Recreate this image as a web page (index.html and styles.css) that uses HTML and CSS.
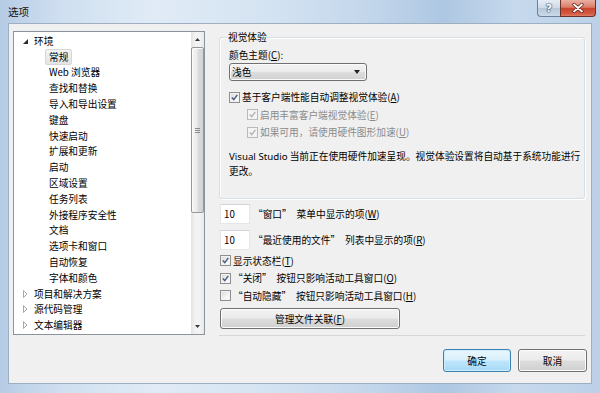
FILE: index.html
```html
<!DOCTYPE html>
<html lang="zh-CN">
<head>
<meta charset="utf-8">
<title>选项</title>
<link rel="stylesheet" href="styles.css">
</head>
<body>
<div class="window">
  <div class="titlebar">
    <div class="title">选项</div>
    <div class="caption-btns">
      <div class="cap-btn help">?</div>
      <div class="cap-btn close">
        <svg width="12" height="10" viewBox="0 0 12 10"><path d="M2 1.5 L10 8.5 M10 1.5 L2 8.5" stroke="#5a1a12" stroke-width="3.2" stroke-linecap="round"/><path d="M2 1.5 L10 8.5 M10 1.5 L2 8.5" stroke="#ffffff" stroke-width="1.8" stroke-linecap="round"/></svg>
      </div>
    </div>
  </div>
  <div class="client">
    <div class="main">
      <div class="tree">
        <div class="tree-list">
          <div class="row root"><span class="exp"><svg width="12" height="12" viewBox="0 0 12 12"><polygon points="1,9 6,9 6,4" fill="#2b2b2b"/></svg></span>环境</div>
          <div class="row child"><span class="sel">常规</span></div>
          <div class="row child">Web 浏览器</div>
          <div class="row child">查找和替换</div>
          <div class="row child">导入和导出设置</div>
          <div class="row child">键盘</div>
          <div class="row child">快速启动</div>
          <div class="row child">扩展和更新</div>
          <div class="row child">启动</div>
          <div class="row child">区域设置</div>
          <div class="row child">任务列表</div>
          <div class="row child">外接程序安全性</div>
          <div class="row child">文档</div>
          <div class="row child">选项卡和窗口</div>
          <div class="row child">自动恢复</div>
          <div class="row child">字体和颜色</div>
          <div class="row root"><span class="exp"><svg width="12" height="12" viewBox="0 0 12 12"><polygon points="1.5,2.5 5,6 1.5,9.5" fill="none" stroke="#a8a8a8"/></svg></span>项目和解决方案</div>
          <div class="row root"><span class="exp"><svg width="12" height="12" viewBox="0 0 12 12"><polygon points="1.5,2.5 5,6 1.5,9.5" fill="none" stroke="#a8a8a8"/></svg></span>源代码管理</div>
          <div class="row root"><span class="exp"><svg width="12" height="12" viewBox="0 0 12 12"><polygon points="1.5,2.5 5,6 1.5,9.5" fill="none" stroke="#a8a8a8"/></svg></span>文本编辑器</div>
        </div>
        <div class="vscroll">
          <div class="sb-arrow"><svg width="5" height="3" viewBox="0 0 5 3"><polygon points="0,3 5,3 2.5,0" fill="#3a3a3a"/></svg></div>
          <div class="sb-track">
            <div class="thumb"><svg width="5" height="5" viewBox="0 0 5 5"><path d="M0 0.5H5M0 2.5H5M0 4.5H5" stroke="#8a8a8a" stroke-width="1"/></svg></div>
          </div>
          <div class="sb-arrow"><svg width="5" height="3" viewBox="0 0 5 3"><polygon points="0,0 5,0 2.5,3" fill="#3a3a3a"/></svg></div>
        </div>
      </div>
      <div class="page">
        <fieldset class="group">
          <legend>视觉体验</legend>
          <div class="lbl">颜色主题(<u>C</u>):</div>
          <div class="combo"><span>浅色</span><svg width="6" height="4" viewBox="0 0 6 4"><polygon points="0,0 6,0 3,4" fill="#222"/></svg></div>
          <div class="chk-row first">
            <span class="cb"><svg width="7" height="7" viewBox="0 0 7 7"><path d="M0.8 3.4 L2.8 5.6 L6.3 0.9" fill="none" stroke="#4a5d82" stroke-width="1.5"/></svg></span>
            <span>基于客户端性能自动调整视觉体验(<u>A</u>)</span>
          </div>
          <div class="chk-row sub disabled">
            <span class="cb"><svg width="7" height="7" viewBox="0 0 7 7"><path d="M0.8 3.4 L2.8 5.6 L6.3 0.9" fill="none" stroke="#b3b3b3" stroke-width="1.5"/></svg></span>
            <span>启用丰富客户端视觉体验(<u>E</u>)</span>
          </div>
          <div class="chk-row sub disabled">
            <span class="cb"><svg width="7" height="7" viewBox="0 0 7 7"><path d="M0.8 3.4 L2.8 5.6 L6.3 0.9" fill="none" stroke="#b3b3b3" stroke-width="1.5"/></svg></span>
            <span>如果可用，请使用硬件图形加速(<u>U</u>)</span>
          </div>
          <div class="desc"><span class="latin">Visual Studio</span> 当前正在使用硬件加速呈现。视觉体验设置将自动基于系统功能进行<br>更改。</div>
        </fieldset>
        <div class="num-row first">
          <div class="num">10</div>
          <span class="num-lbl">“窗口”　菜单中显示的项(<u>W</u>)</span>
        </div>
        <div class="num-row">
          <div class="num">10</div>
          <span class="num-lbl">“最近使用的文件”　列表中显示的项(<u>R</u>)</span>
        </div>
        <div class="chk-row low first-low">
          <span class="cb"><svg width="7" height="7" viewBox="0 0 7 7"><path d="M0.8 3.4 L2.8 5.6 L6.3 0.9" fill="none" stroke="#4a5d82" stroke-width="1.5"/></svg></span>
          <span>显示状态栏(<u>T</u>)</span>
        </div>
        <div class="chk-row low">
          <span class="cb"><svg width="7" height="7" viewBox="0 0 7 7"><path d="M0.8 3.4 L2.8 5.6 L6.3 0.9" fill="none" stroke="#4a5d82" stroke-width="1.5"/></svg></span>
          <span>“关闭”　按钮只影响活动工具窗口(<u>O</u>)</span>
        </div>
        <div class="chk-row low">
          <span class="cb"></span>
          <span>“自动隐藏”　按钮只影响活动工具窗口(<u>H</u>)</span>
        </div>
        <div class="btn assoc">管理文件关联(<u>F</u>)</div>
        <div class="sep"></div>
      </div>
    </div>
    <div class="footer">
      <div class="btn default">确定</div>
      <div class="btn cancel">取消</div>
    </div>
  </div>
</div>
</body>
</html>
```

FILE: styles.css
```css
* { box-sizing: border-box; }
html, body { margin: 0; padding: 0; }
body {
  width: 600px;
  height: 393px;
  overflow: hidden;
  font-family: "Noto Sans CJK SC", "Noto Sans", sans-serif;
  font-size: 9.7px;
  color: #000;
}
u { text-decoration: underline; text-underline-offset: 1px; }

.window {
  width: 600px;
  height: 393px;
  display: flex;
  flex-direction: column;
  padding: 0 8px 9px;
  background: linear-gradient(to right, #b6cce5 0%, #cfdff0 10%, #e0ebf6 26%, #d4e3f2 45%, #c2d6eb 62%, #aec7e2 74%, #c6d9ed 86%, #bcd1e8 100%);
}

.titlebar {
  height: 23px;
  flex: none;
  margin: 0 -8px;
  padding-left: 8px;
  display: flex;
  justify-content: space-between;
  align-items: flex-start;
}
.title {
  font-size: 10.5px;
  line-height: 22px;
  padding-top: 1px;
  color: #111;
}
.caption-btns {
  display: flex;
  margin-right: 4px;
}
.cap-btn {
  height: 17px;
  display: flex;
  align-items: center;
  justify-content: center;
  border: 1px solid #6f819a;
  border-top: none;
}
.help {
  width: 23px;
  border-right: none;
  border-radius: 0 0 0 4px;
  background: linear-gradient(#e6edf5, #cfdbe9 48%, #b7c8dc 52%, #cbd9ea);
  color: #fff;
  font-family: "DejaVu Sans", sans-serif;
  font-weight: bold;
  font-size: 11px;
  text-shadow: 0 0 1px #33455c, 0 0 1px #33455c, 0 0 2px #33455c;
}
.close {
  width: 36px;
  border-color: #6a3329;
  border-radius: 0 0 4px 0;
  background: linear-gradient(#eab0a2, #dc7e69 45%, #c9452e 52%, #d45a43 85%, #e27c61);
}

.client {
  flex: 1;
  display: flex;
  flex-direction: column;
  background: #f0f0f0;
  border: 1px solid #9eafc2;
  padding: 7px 6px 0 4px;
}
.main {
  height: 305px;
  display: flex;
  flex: none;
}

/* tree */
.tree {
  width: 192px;
  height: 304px;
  border: 1px solid #8d939b;
  background: #fff;
  display: flex;
}
.tree-list {
  flex: 1;
  overflow: hidden;
  padding-top: 1px;
}
.row {
  height: 15.8px;
  display: flex;
  align-items: center;
  white-space: nowrap;
  line-height: 14px;
}
.root { padding-left: 8px; }
.child { padding-left: 35px; }
.exp {
  width: 12px;
  height: 12px;
  display: flex;
  flex: none;
}
.sel {
  margin-left: -4px;
  padding: 0 3px;
  height: 16px;
  line-height: 14px;
  border: 1px solid #d6d6d6;
  border-radius: 2px;
  background: linear-gradient(#f3f3f3, #e4e4e4);
}

.vscroll {
  width: 13px;
  display: flex;
  flex-direction: column;
  background: linear-gradient(to right, #e4e4e4, #f3f3f3 35%, #f3f3f3 70%, #e8e8e8);
}
.sb-arrow {
  height: 15px;
  flex: none;
  display: flex;
  align-items: center;
  justify-content: center;
}
.sb-track {
  flex: 1;
}
.thumb {
  height: 166px;
  border: 1px solid #979797;
  border-radius: 2px;
  background: linear-gradient(to right, #f5f5f5, #ececec 45%, #dcdcdc 55%, #d3d3d3);
  box-shadow: inset 1px 1px 0 #fbfbfb;
  display: flex;
  align-items: center;
  justify-content: center;
}

/* page */
.page {
  width: 366px;
  margin-left: 14px;
  display: flex;
  flex-direction: column;
}
.group {
  margin: 0;
  min-inline-size: 0;
  padding: 0 9px 19.25px;
  border: 1px solid #d5dfe5;
  border-radius: 3px;
  box-shadow: 1px 1px 0 #fff, inset 1px 1px 0 #fff;
}
.group legend {
  padding: 0;
  margin-left: -1px;
  line-height: 12px;
  font-size: 9.7px;
}
.lbl {
  margin-top: 5px;
  line-height: 14px;
}
.combo {
  margin-top: 1px;
  width: 138px;
  height: 18px;
  border: 1px solid #707070;
  border-radius: 3px;
  background: linear-gradient(#f3f3f3, #ebebeb 48%, #dedede 52%, #d0d0d0);
  box-shadow: inset 0 0 0 1px #fafafa;
  display: flex;
  align-items: center;
  justify-content: space-between;
  padding: 0 6px 0 2px;
  line-height: 14px;
}

.chk-row {
  height: 17.5px;
  display: flex;
  align-items: center;
  white-space: nowrap;
  line-height: 14px;
}
.chk-row.first { margin-top: 7.25px; }
.chk-row.sub { padding-left: 18px; }
.chk-row.low { padding-left: 1px; }
.chk-row.first-low { margin-top: 2px; }
.cb {
  width: 11px;
  height: 11px;
  flex: none;
  margin-right: 2px;
  border: 1px solid #8e8f8f;
  background: linear-gradient(135deg, #d6d6d6, #f4f4f4 60%, #ffffff);
  box-shadow: inset 0 0 0 1px #f2f2f2;
  display: flex;
  align-items: center;
  justify-content: center;
}
.disabled { color: #8b8b8b; }
.disabled .cb {
  border-color: #b9b9b9;
  background: #f4f4f4;
}

.desc {
  margin-top: 8px;
  line-height: 14.5px;
  white-space: nowrap;
}
.latin { font-family: "Noto Sans", "Noto Sans CJK SC", sans-serif; }

.num-row {
  display: flex;
  align-items: center;
  margin-top: 6px;
  white-space: nowrap;
}
.num-row.first { margin-top: 5px; }
.num {
  width: 30px;
  height: 20px;
  margin-left: 1px;
  background: #fff;
  border: 1px solid #e3e7eb;
  border-top-color: #cfd4da;
  padding-left: 3px;
  line-height: 18px;
}
.num-lbl { margin-left: 3px; }

.btn {
  height: 21px;
  border: 1px solid #707070;
  border-radius: 3px;
  background: linear-gradient(#f3f3f3, #ebebeb 48%, #dddddd 52%, #cfcfcf);
  box-shadow: inset 0 0 0 1px #fbfbfb;
  display: flex;
  align-items: center;
  justify-content: center;
  line-height: 14px;
  white-space: nowrap;
}
.assoc {
  width: 180px;
  margin-top: 3.5px;
  margin-left: 1px;
}
.sep {
  margin-top: auto;
  height: 1px;
  background: #d7d7d7;
}

.footer {
  display: flex;
  justify-content: flex-end;
  gap: 7px;
  margin-top: 13px;
  margin-right: -2px;
}
.footer .btn { height: 23px; }
.default {
  width: 68px;
  border-color: #3c7fb1;
  background: linear-gradient(#eaf6fd, #d9f0fc 48%, #bee6fd 52%, #a7d9f5);
  box-shadow: inset 0 0 0 1px #cdeefc;
}
.cancel { width: 69px; }
```
